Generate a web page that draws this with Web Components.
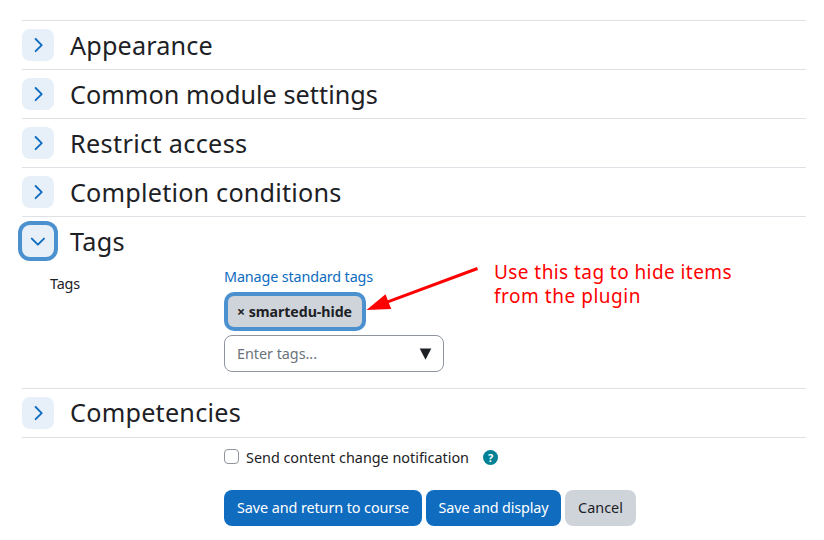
<!DOCTYPE html>
<html lang="en">
<head>
<meta charset="utf-8">
<title>Module settings</title>
<style>
html,body{margin:0;background:#fff}
body{width:824px;height:540px;overflow:hidden;font-family:"Noto Sans","Open Sans",sans-serif;font-size:14.4px;color:#1d2125}
</style>
</head>
<body>
<settings-page></settings-page>
<script>
const define = (name, html, setup) => customElements.define(name, class extends HTMLElement {
  connectedCallback() {
    if (this.shadowRoot) return;
    const t = document.createElement('template');
    t.innerHTML = html;
    this.attachShadow({mode: 'open'}).append(t.content.cloneNode(true));
    if (setup) setup(this, this.shadowRoot);
  }
});

// A single line of text whose tracking is set so that it fills the given width.
define('fit-text', `<style>:host{display:inline-block;white-space:pre}span{display:inline-block}</style><span><slot></slot></span>`, (el, root) => {
  const want = +el.getAttribute('width'), span = root.querySelector('span');
  const n = el.textContent.length;
  const natural = span.getBoundingClientRect().width;
  span.style.letterSpacing = ((want - natural) / n) + 'px';
  el.style.width = want + 'px';
});

define('toggle-button', `<style>
:host{display:grid;place-items:center;width:32px;height:32px;border-radius:8px;background:#e7f0f9;color:#0f6cbf}
:host([open]){box-shadow:0 0 0 4px #4b91cf}
svg{display:block}
:host([open]) svg{transform:rotate(90deg)}
</style><svg width="32" height="32" viewBox="0 0 32 32" fill="none" stroke="currentColor" stroke-width="1.9" stroke-linecap="round" stroke-linejoin="round"><path d="M13.6 10 L19.7 16.1 L13.6 22.2"/></svg>`);

define('section-row', `<style>
:host{display:block;border-top:1px solid #dee2e6}
header{display:flex;align-items:center;gap:16px;height:48px}
h3{margin:0;font-size:25.2px;font-weight:400;line-height:32px;height:32px}
:host([raised]) h3{padding-bottom:2px}
</style><header><slot name="toggle"></slot><h3><slot name="title"></slot></h3></header><slot></slot>`);

define('tag-chip', `<style>
:host{display:flex;align-items:center;box-sizing:border-box;width:134px;height:31px;padding-left:9px;border-radius:6px;background:#ced4da;box-shadow:0 0 0 4px #4b91cf;font-weight:700;font-size:14.2px;line-height:20px}
</style><slot></slot>`);

define('tag-input', `<style>
:host{display:flex;align-items:center;justify-content:space-between;box-sizing:border-box;width:220px;height:37px;border:1px solid #8f959e;border-radius:8px;padding:0 11px 0 12px;color:#6a737b}
svg{display:block}
</style><slot></slot><svg width="13" height="12" viewBox="0 0 13 12"><path d="M.7.6h11.6L6.5 11.8z" fill="#1d2125"/></svg>`);

define('action-button', `<style>
:host{display:flex;align-items:center;justify-content:center;box-sizing:border-box;height:36px;border-radius:8px;background:#0f6cbf;color:#fff}
:host([secondary]){background:#ced4da;color:#1d2125}
</style><slot></slot>`);

define('help-icon', `<style>
:host{display:grid;place-items:center;width:15px;height:15px;border-radius:50%;background:#008196;color:#fff;font:700 11px/15px "Noto Sans",sans-serif}
</style>?`);

define('callout-note', `<style>
:host{position:absolute;left:360px;top:258px;width:400px;height:60px;color:#f00;font-size:19px;line-height:24px}
svg{position:absolute;left:0;top:0}
div{display:flex;flex-direction:column;padding:2px 0 0 134px}
</style>
<svg width="130" height="60" viewBox="0 0 130 60"><path d="M117.5 10.5L27 44.2" stroke="#f00" stroke-width="3"/><path d="M6.5 52L25.5 36.2L31.2 51Z" fill="#f00"/></svg>
<div><fit-text width="238">Use this tag to hide items</fit-text><fit-text width="147">from the plugin</fit-text></div>`);

define('settings-page', `<style>
:host{display:block;width:784px;padding:20px 18px 0 22px;line-height:22px}
.tags{display:grid;grid-template-columns:174px 1fr;padding-left:28px;height:123px;box-sizing:border-box}
.label{padding-top:8px}
.fields{display:flex;flex-direction:column;align-items:flex-start;padding-top:1px}
.link{color:#0f6cbf}
tag-chip{margin:8px 0 0 4px}
tag-input{margin-top:8px}
footer{border-top:1px solid #dee2e6;padding-left:202px}
.check{display:flex;align-items:center;height:22px;padding-top:9px}
.box{width:13px;height:13px;border:1px solid #8f959e;border-radius:4px;margin:-3px 7px 0 0}
help-icon{margin:-2px 0 0 14px}
.actions{display:flex;gap:4px;padding-top:21px}
</style>
<section-row><toggle-button slot="toggle"></toggle-button><fit-text slot="title" width="143">Appearance</fit-text></section-row>
<section-row><toggle-button slot="toggle"></toggle-button><fit-text slot="title" width="308">Common module settings</fit-text></section-row>
<section-row><toggle-button slot="toggle"></toggle-button><fit-text slot="title" width="177.5">Restrict access</fit-text></section-row>
<section-row><toggle-button slot="toggle"></toggle-button><fit-text slot="title" width="271.5">Completion conditions</fit-text></section-row>
<section-row><toggle-button slot="toggle" open></toggle-button><fit-text slot="title" width="55">Tags</fit-text>
  <div class="tags"><div class="label"><fit-text width="30">Tags</fit-text></div>
    <div class="fields"><fit-text class="link" width="149">Manage standard tags</fit-text>
      <tag-chip><fit-text width="115">× smartedu-hide</fit-text></tag-chip>
      <tag-input><fit-text width="80">Enter tags...</fit-text></tag-input></div></div>
</section-row>
<section-row raised><toggle-button slot="toggle"></toggle-button><fit-text slot="title" width="171">Competencies</fit-text></section-row>
<footer>
  <div class="check"><span class="box"></span><fit-text width="223">Send content change notification</fit-text><help-icon></help-icon></div>
  <div class="actions">
    <action-button style="width:198px"><fit-text width="172">Save and return to course</fit-text></action-button>
    <action-button style="width:135px"><fit-text width="110">Save and display</fit-text></action-button>
    <action-button secondary style="width:71px"><fit-text width="45">Cancel</fit-text></action-button>
  </div>
</footer>
<callout-note></callout-note>`);
</script>
</body>
</html>
